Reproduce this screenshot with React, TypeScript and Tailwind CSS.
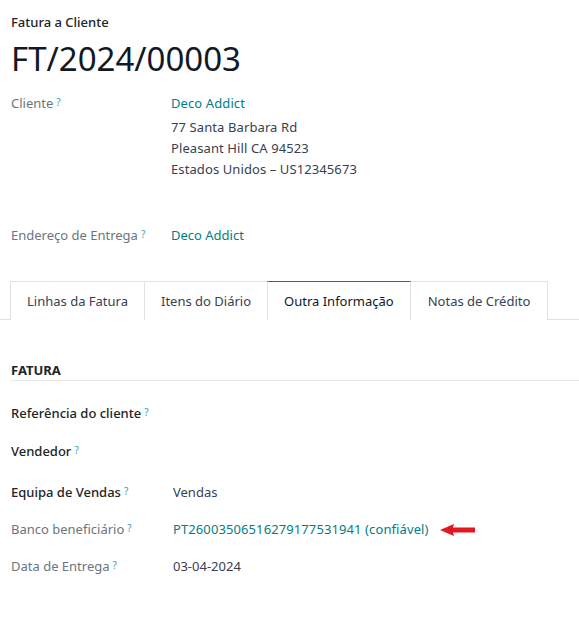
import React from "react";

const Q = () => (
  <sup className="ml-[3px] text-[10px] font-normal text-[#3d9db3] relative -top-[2px]">?</sup>
);

function Row({
  label,
  dark,
  children,
  className,
}: {
  label: string;
  dark?: boolean;
  children?: React.ReactNode;
  className?: string;
}) {
  return (
    <div className={"flex " + (className || "")}>
      <div
        className={
          "w-[162px] shrink-0 " +
          (dark ? "text-[#212529] font-medium" : "text-[#6c757d]")
        }
      >
        {label}
        <Q />
      </div>
      <div className="text-[#374151]">{children}</div>
    </div>
  );
}

export default function App() {
  return (
    <div
      className="w-[579px] h-[624px] bg-white text-[13px] leading-[21px] text-[#212529] overflow-hidden"
      style={{ fontFamily: '"Noto Sans", "Open Sans", sans-serif' }}
    >
      <div className="px-[11px] pt-[12px]">
        <div className="text-[13px] font-medium leading-[20px] text-[#212529]">
          Fatura a Cliente
        </div>
        <div className="text-[33px] leading-[40px] mt-[7px] text-[#111827]">
          FT/2024/00003
        </div>
        <div className="mt-[14px] flex">
          <div className="w-[160px] shrink-0 text-[#6c757d] leading-[21px]">
            Cliente
            <Q />
          </div>
          <div className="text-[#374151] tracking-[0.1px]">
            <div className="text-[#017e84] leading-[21px]">Deco Addict</div>
            <div className="mt-[3px]">77 Santa Barbara Rd</div>
            <div>Pleasant Hill CA 94523</div>
            <div>Estados Unidos – US12345673</div>
          </div>
        </div>
        <div className="mt-[45px] flex">
          <div className="w-[160px] shrink-0 text-[#6c757d]">
            Endereço de Entrega
            <Q />
          </div>
          <div className="text-[#017e84]">Deco Addict</div>
        </div>
      </div>

      <div className="mt-[35px] flex border-b border-[#dee2e6] pl-[10px] h-[39px]">
        <div className="px-[16px] flex items-center border border-[#dee2e6] border-b-0 text-[#374151] -mb-px bg-white h-[39px] border-r-0">
          Linhas da Fatura
        </div>
        <div className="px-[16px] flex items-center border border-[#dee2e6] border-b-0 text-[#374151] -mb-px bg-white h-[39px] border-r-0">
          Itens do Diário
        </div>
        <div className="px-[16px] flex items-center border border-[#dee2e6] border-t-[#714b67] border-b-0 text-[#111827] -mb-px bg-white h-[39px] relative z-10">
          Outra Informação
        </div>
        <div className="px-[17px] flex items-center border border-[#dee2e6] border-l-0 border-b-0 text-[#374151] -mb-px bg-white h-[39px]">
          Notas de Crédito
        </div>
      </div>

      <div className="pl-[11px] pt-[41px]">
        <div className="font-bold text-[13px] leading-[19px] border-b border-[#e5e7eb] text-[#212529] uppercase">
          Fatura
        </div>
        <div className="pt-[22px] flex flex-col">
          <div className="h-[21px] text-[#212529] font-medium">
            Referência do cliente
            <Q />
          </div>
          <div className="h-[21px] mt-[17px] text-[#212529] font-medium">
            Vendedor
            <Q />
          </div>
          <Row label="Equipa de Vendas" dark className="mt-[20px]">
            Vendas
          </Row>
          <Row label="Banco beneficiário" className="mt-[16px]">
            <span className="flex items-center">
              <span className="text-[#017e84] tracking-[0.1px]">
                PT26003506516279177531941 (confiável)
              </span>
              <svg
                width="36"
                height="14"
                viewBox="0 0 36 14"
                className="ml-[11px]"
              >
                <polygon
                  points="0,7 14,1 13,4.5 35,4.5 35,9.5 13,9.5 14,13"
                  fill="#e3171f"
                />
              </svg>
            </span>
          </Row>
          <Row label="Data de Entrega" className="mt-[16px]">
            03-04-2024
          </Row>
        </div>
      </div>
    </div>
  );
}
